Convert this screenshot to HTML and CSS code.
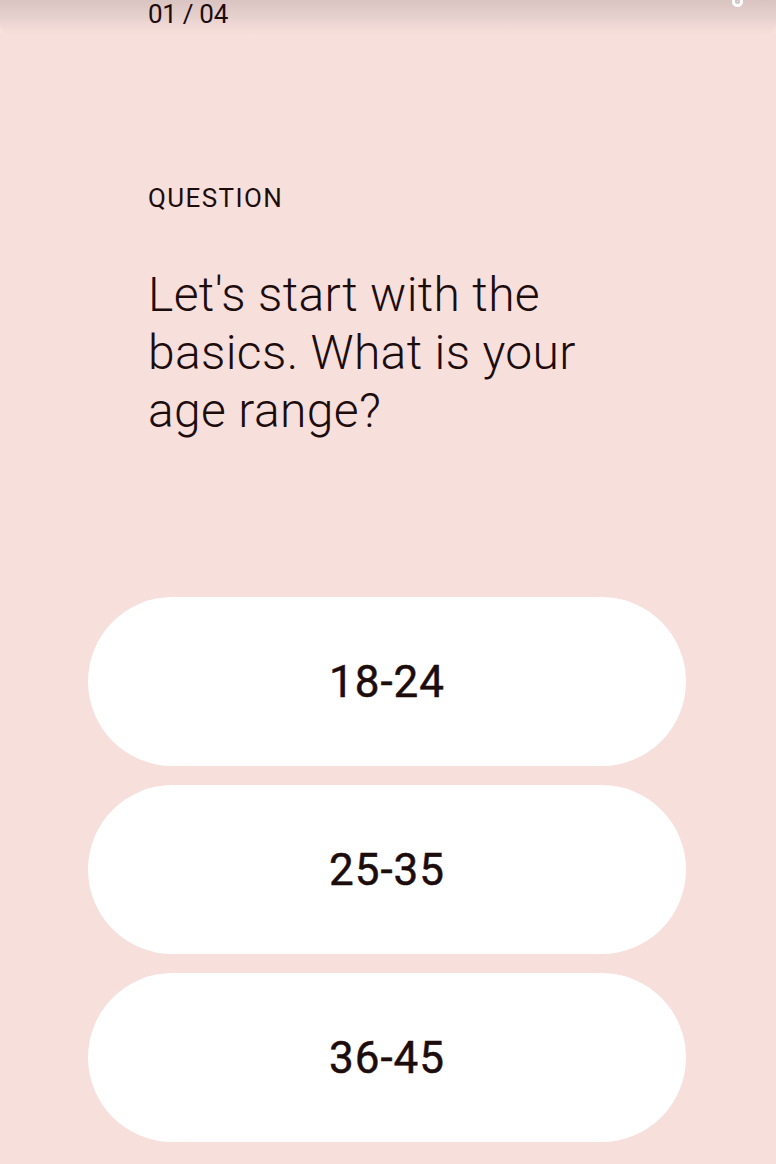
FILE: index.html
```html
<!DOCTYPE html>
<html lang="en">
<head>
<meta charset="utf-8">
<title>Quiz</title>
<link rel="stylesheet" href="styles.css">
</head>
<body>
<div class="screen">
  <header class="topbar">
    <span class="progress">01 / 04</span>
    <span class="dot"></span>
  </header>
  <main class="content">
    <div class="label">QUESTION</div>
    <h1 class="question">Let's start with the basics. What is your age range?</h1>
  </main>
  <div class="options">
    <button class="option">18-24</button>
    <button class="option">25-35</button>
    <button class="option">36-45</button>
  </div>
</div>
</body>
</html>
```
FILE: styles.css
```css
html, body {
  margin: 0;
  padding: 0;
  background: #f7dfdc;
}
body {
  font-family: Roboto, "Liberation Sans", sans-serif;
  color: #1d0c0c;
  width: 776px;
  height: 1164px;
  overflow: hidden;
}
.screen {
  position: relative;
  display: flex;
  flex-direction: column;
}
.topbar {
  position: relative;
  height: 36px;
  padding-left: 148px;
  box-sizing: border-box;
  background: linear-gradient(#dac4c1 0%, #e6d0cd 45%, #f4dcd9 85%, #f7dfdc 100%);
  border-radius: 0 0 14px 14px;
}
.progress {
  display: block;
  font-size: 26px;
  line-height: 28px;
  font-weight: 400;
  letter-spacing: -0.3px;
}
.dot {
  position: absolute;
  top: -4px;
  left: 732px;
  width: 11px;
  height: 11px;
  border-radius: 50%;
  background: #ffffff;
  box-shadow: inset 0 0 0 3px #fff, inset 0 0 0 5px #cfc4c2;
}
.content {
  padding: 147px 148px 0 148px;
}
.label {
  font-size: 26px;
  line-height: 30px;
  letter-spacing: 1.4px;
  font-weight: 400;
}
.question {
  margin: 53px 0 0 0;
  font-size: 48px;
  line-height: 58px;
  font-weight: 300;
  letter-spacing: 0.35px;
}
.options {
  display: flex;
  flex-direction: column;
  gap: 19px;
  padding: 157px 90px 0 88px;
}
.option {
  height: 169px;
  border: none;
  border-radius: 85px;
  background: #ffffff;
  font-family: Roboto, "Liberation Sans", sans-serif;
  font-size: 44px;
  font-weight: 400;
  letter-spacing: 1px;
  -webkit-text-stroke: 0.5px #1d0c0c;
  color: #1d0c0c;
  display: flex;
  align-items: center;
  justify-content: center;
  padding: 0;
}
```
